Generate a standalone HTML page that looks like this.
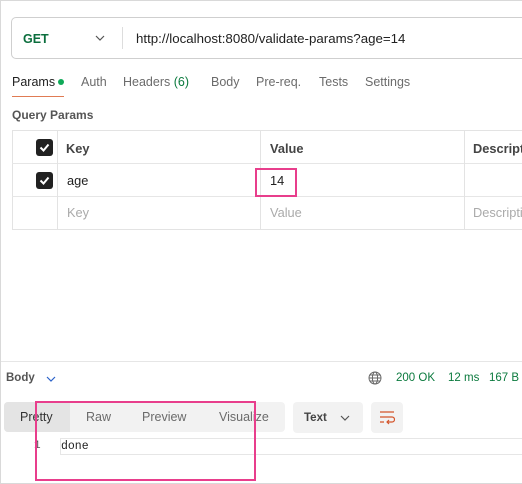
<!DOCTYPE html>
<html><head><style>
*{margin:0;padding:0;box-sizing:border-box}
body{width:522px;height:484px;overflow:hidden;background:#fff;font-family:"Liberation Sans",sans-serif;font-size:12px;color:#212121;position:relative}
.a{position:absolute;white-space:nowrap}
.frame{position:absolute;left:0;top:0;width:522px;height:484px;border:1px solid #d9d9d9;border-right:none}
.g{color:#6b6b6b}
.cb{position:absolute;width:17px;height:17px;background:#212121;border-radius:3px}
.cb svg{position:absolute;left:3px;top:3px}
.t{font-size:12.8px}
</style></head><body>
<div class="frame"></div>
<div class="a" style="left:11px;top:17px;width:520px;height:42px;border:1px solid #cfcfcf;border-radius:5px"></div>
<div class="a" style="left:23px;top:32px;font-weight:bold;color:#0b6e3d;font-size:12.5px">GET</div>
<svg class="a" style="left:95px;top:35px" width="10" height="6"><path d="M1 1l4 4 4-4" stroke="#555" fill="none" stroke-width="1.2"/></svg>
<div class="a" style="left:122px;top:27px;width:1px;height:22px;background:#ddd"></div>
<div class="a" style="left:136px;top:31px;font-size:13.3px">http://localhost:8080/validate-params?age=14</div>

<div class="a" style="left:12px;top:75px;font-size:12.5px">Params</div>
<div class="a" style="left:58px;top:79px;width:6px;height:6px;border-radius:50%;background:#0fa958"></div>
<div class="a g" style="left:81px;top:75px;font-size:12.5px">Auth</div>
<div class="a g" style="left:123px;top:75px;font-size:12.5px">Headers <span style="color:#0b7a3e">(6)</span></div>
<div class="a g" style="left:211px;top:75px;font-size:12.5px">Body</div>
<div class="a g" style="left:256px;top:75px;font-size:12.5px">Pre-req.</div>
<div class="a g" style="left:319px;top:75px;font-size:12.5px">Tests</div>
<div class="a g" style="left:365px;top:75px;font-size:12.5px">Settings</div>
<div class="a" style="left:12px;top:96px;width:52px;height:1px;background:#e07b53"></div>

<div class="a" style="left:12px;top:108px;font-weight:bold;color:#555">Query Params</div>

<div class="a" style="left:12px;top:130px;width:512px;height:100px;border:1px solid #e3e3e3"></div>
<div class="a" style="left:12px;top:163px;width:512px;height:1px;background:#e6e6e6"></div>
<div class="a" style="left:12px;top:196px;width:512px;height:1px;background:#e6e6e6"></div>
<div class="a" style="left:57px;top:130px;width:1px;height:100px;background:#e3e3e3"></div>
<div class="a" style="left:260px;top:130px;width:1px;height:100px;background:#e3e3e3"></div>
<div class="a" style="left:464px;top:130px;width:1px;height:100px;background:#e3e3e3"></div>
<div class="cb" style="left:36px;top:139px"><svg width="11" height="11"><path d="M1.5 5.5l3 3 5-6" stroke="#fff" stroke-width="2" fill="none"/></svg></div>
<div class="cb" style="left:36px;top:172px"><svg width="11" height="11"><path d="M1.5 5.5l3 3 5-6" stroke="#fff" stroke-width="2" fill="none"/></svg></div>
<div class="a t" style="left:66px;top:141px;font-weight:bold;color:#444">Key</div>
<div class="a t" style="left:270px;top:141px;font-weight:bold;color:#444">Value</div>
<div class="a t" style="left:473px;top:141px;font-weight:bold;color:#444">Description</div>
<div class="a t" style="left:67px;top:173px">age</div>
<div class="a t" style="left:270px;top:173px">14</div>
<div class="a" style="left:255px;top:168px;width:42px;height:29px;border:2px solid #e83e8c"></div>
<div class="a t" style="left:67px;top:205px;color:#aaa">Key</div>
<div class="a t" style="left:270px;top:205px;color:#aaa">Value</div>
<div class="a t" style="left:473px;top:205px;color:#aaa">Description</div>

<div class="a" style="left:1px;top:361px;width:521px;height:1px;background:#e6e6e6"></div>
<div class="a" style="left:6px;top:372px;font-weight:bold;color:#555;font-size:11.5px">Body</div>
<svg class="a" style="left:46px;top:376px" width="10" height="6"><path d="M1 1l4 4 4-4" stroke="#2a62c9" fill="none" stroke-width="1.2"/></svg>
<svg class="a" style="left:368px;top:371px" width="14" height="14"><circle cx="7" cy="7" r="6" stroke="#666" fill="none"/><ellipse cx="7" cy="7" rx="2.6" ry="6" stroke="#666" fill="none"/><path d="M1 7h12M2 4h10M2 10h10" stroke="#666" fill="none"/></svg>
<div class="a" style="left:396px;top:372px;color:#0b7a3e;font-size:11.5px">200 OK</div>
<div class="a" style="left:448px;top:372px;color:#0b7a3e;font-size:11.5px">12 ms</div>
<div class="a" style="left:489px;top:372px;color:#0b7a3e;font-size:11.5px">167 B</div>

<div class="a" style="left:4px;top:402px;width:281px;height:30px;background:#f2f2f2;border-radius:4px"></div>
<div class="a" style="left:4px;top:402px;width:66px;height:30px;background:#e4e4e4;border-radius:4px 0 0 4px"></div>
<div class="a" style="left:20px;top:410px;font-size:12.5px;color:#333">Pretty</div>
<div class="a g" style="left:86px;top:410px;font-size:12.5px">Raw</div>
<div class="a g" style="left:142px;top:410px;font-size:12.5px">Preview</div>
<div class="a g" style="left:219px;top:410px;font-size:12.5px">Visualize</div>
<div class="a" style="left:293px;top:402px;width:70px;height:31px;background:#f2f2f2;border-radius:4px"></div>
<div class="a" style="left:304px;top:412px;font-weight:bold;color:#444;font-size:11.5px">Text</div>
<svg class="a" style="left:340px;top:415px" width="10" height="6"><path d="M1 1l4 4 4-4" stroke="#555" fill="none" stroke-width="1.2"/></svg>
<div class="a" style="left:371px;top:402px;width:32px;height:31px;background:#f2f2f2;border-radius:4px"></div>
<svg class="a" style="left:379px;top:410px" width="16" height="15"><path d="M1 2h14M1 7h12a2.5 2.5 0 0 1 0 5H8M10 10l-2 2 2 2M1 12h4" stroke="#d4542a" fill="none" stroke-width="1.2"/></svg>

<div class="a" style="left:60px;top:438px;width:470px;height:17px;border-top:1px solid #e6e6e6;border-bottom:1px solid #e6e6e6;border-left:1px solid #e6e6e6"></div>
<div class="a" style="left:34px;top:440px;color:#555;font-family:'Liberation Mono',monospace;font-size:11px">1</div>
<div class="a" style="left:61px;top:440px;font-family:'Liberation Mono',monospace;font-size:11.5px">done</div>
<div class="a" style="left:35px;top:401px;width:221px;height:80px;border:2px solid #e83e8c"></div>
</body></html>
